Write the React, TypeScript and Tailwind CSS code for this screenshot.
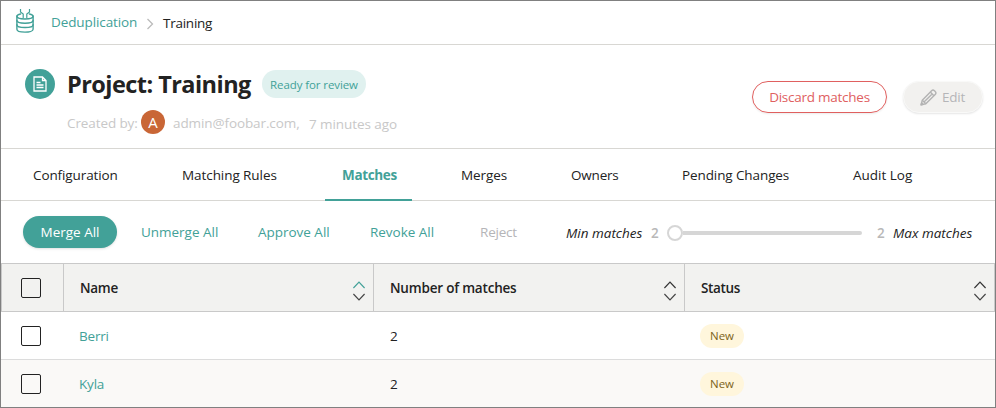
import React from "react";

function StackIcon() {
  return (
    <svg className="-mt-0.5" width="18" height="24" viewBox="0 0 18 24" fill="none" stroke="#42a198" strokeWidth="1.500" strokeLinecap="round">
      <path d="M4.500 0v3l2.700 2v3.500M13.500 0v3l-2.700 2v3.500" strokeWidth="1.200" />
      <path d="M4.600 4.900C2.400 5.300.9 6.200.9 7.300c0 1.600 3.600 2.700 8.100 2.700s8.100-1.100 8.100-2.700c0-1.100-1.500-2-3.700-2.400" />
      <path d="M.9 7.300v12.900c0 1.700 3.600 2.900 8.100 2.900s8.100-1.200 8.100-2.900v-12.900" strokeWidth="1.400" />
      <path d="M.9 11.500c0 1.600 3.600 2.700 8.100 2.700s8.100-1.100 8.100-2.700M.9 15.800c0 1.600 3.600 2.800 8.100 2.800s8.100-1.200 8.100-2.800" />
    </svg>
  );
}

function DocumentIcon() {
  return (
    <svg width="14" height="16" viewBox="0 0 14 16" fill="none" stroke="#fff" strokeWidth="1.300">
      <path d="M1 1h8.500L13 4.500V15H1zM9.500 1v3.500H13" />
      <path d="M3.500 6.500h4M3.500 9h7M3.500 11.500h7" />
    </svg>
  );
}

function PencilIcon() {
  return (
    <svg width="17" height="17" viewBox="0 0 18 18" fill="none" stroke="#b3b3b3" strokeWidth="1.500" strokeLinejoin="round">
      <path d="M1.200 16.800l1.200-5L12.300 1.900c.8-.8 2.200-.8 3 0l.8.8c.8.8.8 2.200 0 3L6.200 15.600z" />
      <path d="M2.400 11.800L6.200 15.600M10.900 3.300l3.800 3.800M4.500 13.500l7.800-7.800" />
      <path d="M1.200 16.800l.5-2.200 1.700 1.700z" fill="#b3b3b3" />
    </svg>
  );
}

function SortIcon({ up = "#333" }: { up?: string }) {
  return (
    <svg width="12" height="20" viewBox="0 0 12 20" fill="none" strokeWidth="1.200">
      <path d="M.4 7L6 1.200 11.600 7" stroke={up} />
      <path d="M.4 13L6 18.800 11.600 13" stroke="#444" />
    </svg>
  );
}

function Checkbox({ fill = "bg-white" }: { fill?: string }) {
  return <span className={`block size-5 rounded-[2px] border border-[#222] ${fill}`} />;
}

const tabs = [
  { label: "Configuration", box: "w-[117px]", text: "tracking-[-0.1px]" },
  { label: "Matching Rules", box: "w-[128px]", text: "tracking-[-0.07px]" },
  { label: "Matches", box: "w-[87px]", text: "tracking-[-0.35px]", active: true },
  { label: "Merges", box: "w-[78px]", text: "tracking-[-0.1px]" },
  { label: "Owners", box: "w-[79px]", text: "tracking-[-0.2px]" },
  { label: "Pending Changes", box: "w-[139px]", text: "tracking-[-0.1px]" },
  { label: "Audit Log", box: "w-[92px]", text: "tracking-[0px]" },
];

const actions = [
  { label: "Unmerge All", box: "w-[117px]" },
  { label: "Approve All", box: "w-[112px]" },
  { label: "Revoke All", box: "w-[110px]" },
];

const rows = [
  { name: "Berri", bg: "h-[47px] bg-white" },
  { name: "Kyla", bg: "h-[47px] border-t border-[#dcdcdc] bg-[#faf9f7] box-content", box: "bg-[#faf9f7]" },
];

export default function App() {
  return (
    <div className="flex h-[408px] w-[996px] flex-col overflow-hidden border border-[#808080] bg-white font-['Open_Sans','Noto_Sans',sans-serif] text-[13.500px] leading-5 whitespace-nowrap text-[#222]">
      <header className="flex h-11 shrink-0 items-center border-b border-[#d8d7d3] pb-0.5 pl-[15px]">
        <StackIcon />
        <span className="ml-[17px] w-[95px] tracking-[-0.1px] text-[#42a198]">Deduplication</span>
        <svg className="mt-1" width="8" height="12" viewBox="0 0 8 12" fill="none" stroke="#bbb" strokeWidth="1.300">
          <path d="M1.500 1L6.500 6L1.500 11" />
        </svg>
        <span className="ml-[9px] pt-0.5 tracking-[-0.25px]">Training</span>
      </header>

      <section className="flex h-[104px] shrink-0 items-start border-b border-[#d8d7d3] pl-6">
        <div className="mt-6 flex size-[30px] items-center justify-center rounded-full bg-[#42a198]">
          <DocumentIcon />
        </div>
        <div className="ml-3 w-[685px] pt-[21px]">
          <div className="flex h-9 items-center">
            <h1 className="w-[195px] text-[23.500px] leading-8 font-bold tracking-[-0.55px]">Project: Training</h1>
            <span className="flex h-7 w-[104px] items-center justify-center rounded-full bg-[#e0f1ef] pt-px text-[11.500px] tracking-[-0.1px] text-[#42a198]">Ready for review</span>
          </div>
          <div className="mt-2 flex h-6 items-center text-[#c8c8c8]">
            <span className="w-[74px] pt-0.5 tracking-[-0.1px]">Created by:</span>
            <span className="flex size-6 items-center justify-center rounded-full bg-[#c96636] text-[15px] text-white">A</span>
            <span className="ml-2 w-[136px] pt-0.5 tracking-[-0.1px]">admin@foobar.com,</span>
            <span className="pt-[3px] tracking-[-0.08px]">7 minutes ago</span>
          </div>
        </div>
        <button className="mt-9 flex h-8 w-[135px] items-center justify-center rounded-full border border-[#e0605f] tracking-[-0.25px] text-[#e0605f] shadow-[0_1px_2px_rgba(0,0,0,0.08)]">Discard matches</button>
        <button className="mt-9 ml-4 flex h-8 w-20 items-center rounded-full border border-[#f9f9f8] bg-[#f2f1ef] pl-4 text-[#b5b5b8] shadow-[0_1px_2px_rgba(0,0,0,0.1)]">
          <PencilIcon />
          <span className="ml-[5px] tracking-[-0.2px]">Edit</span>
        </button>
      </section>

      <nav className="flex h-[52px] shrink-0 gap-8 border-b border-[#d8d7d3] pl-[15px]">
        {tabs.map((t) => (
          <div key={t.label} className={`relative flex shrink-0 items-center pt-px ${t.box} ${t.text} ${t.active ? "pl-[17px] font-bold text-[#42a198]" : "pl-[17px]"}`}>
            {t.label}
            {t.active && <span className="absolute inset-x-0 -bottom-px h-0.5 bg-[#42a198]" />}
          </div>
        ))}
      </nav>

      <div className="flex h-[62px] shrink-0 items-center pl-[22px]">
        <button className="flex h-8 w-[94px] items-center justify-center rounded-full bg-[#42a198] text-white shadow-sm">Merge All</button>
        <div className="ml-6 flex tracking-[-0.02px] text-[#42a198]">
          {actions.map((a) => (
            <span key={a.label} className={a.box}>{a.label}</span>
          ))}
          <span className="w-[86px] tracking-[-0.2px] text-[#b5b5b8]">Reject</span>
        </div>
        <span className="w-[85px] pt-0.5 italic">Min matches</span>
        <span className="w-4 pt-0.5 font-semibold text-[#b8b8b8]">2</span>
        <div className="flex w-[210px] items-center pt-0.5">
          <span className="size-4 shrink-0 rounded-full border-2 border-[#d6d6d6] bg-white" />
          <span className="h-1 w-[179px] rounded-r-full bg-[#d6d6d6]" />
        </div>
        <span className="w-4 pt-0.5 font-semibold text-[#b8b8b8]">2</span>
        <span className="pt-0.5 italic">Max matches</span>
      </div>

      <div className="flex h-[49px] shrink-0 border border-[#c9c9c9] bg-[#f2f2f0] font-semibold">
        <div className="flex w-[62px] items-center border-r border-[#c9c9c9] pl-[19px]"><Checkbox fill="bg-[#f2f2f0]" /></div>
        <div className="flex w-[310px] items-center justify-between border-r border-[#c9c9c9] pr-2 pl-4">
          <span className="tracking-[-0.3px]">Name</span><span className="pt-1.5"><SortIcon up="#42a198" /></span>
        </div>
        <div className="flex w-[311px] items-center justify-between border-r border-[#c9c9c9] pr-2 pl-4">
          <span className="tracking-[-0.2px]">Number of matches</span><span className="pt-1.5"><SortIcon /></span>
        </div>
        <div className="flex flex-1 items-center justify-between pr-2 pl-4">
          <span className="tracking-[-0.35px]">Status</span><span className="pt-1.5"><SortIcon /></span>
        </div>
      </div>
      {rows.map((r) => (
        <div key={r.name} className={`flex shrink-0 items-center pl-5 ${r.bg}`}>
          <Checkbox fill={r.box} />
          <span className="ml-[38px] w-[311px] tracking-[-0.2px] text-[#42a198]">{r.name}</span>
          <span className="w-[310px]">2</span>
          <span className="flex h-6 w-11 items-center justify-center rounded-full bg-[#fff6dc] pt-px text-[11.500px] text-[#7c6420]">New</span>
        </div>
      ))}
    </div>
  );
}
